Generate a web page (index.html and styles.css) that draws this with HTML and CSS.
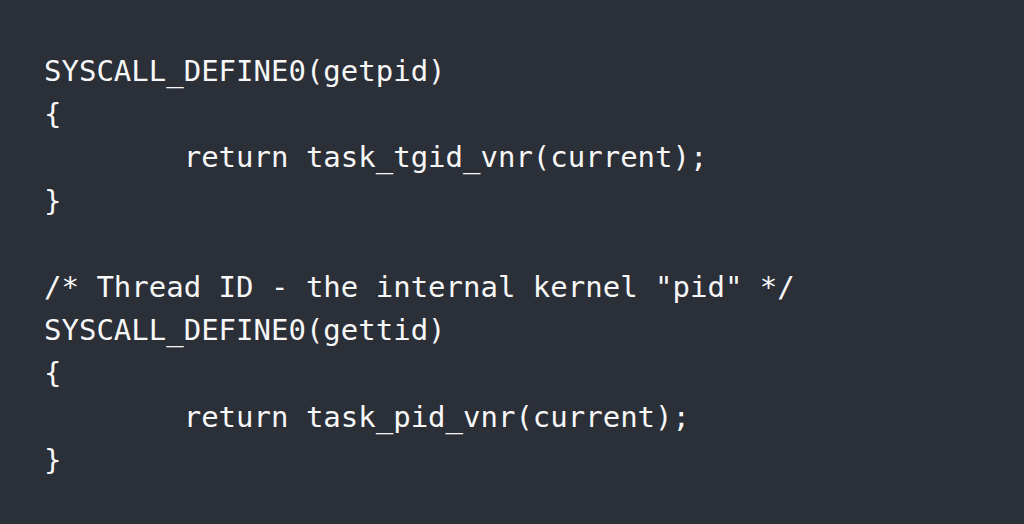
FILE: index.html
```html
<!DOCTYPE html>
<html>
<head>
<meta charset="utf-8">
<link rel="stylesheet" href="styles.css">
</head>
<body>
<pre class="code">SYSCALL_DEFINE0(getpid)
{
        return task_tgid_vnr(current);
}

/* Thread ID - the internal kernel "pid" */
SYSCALL_DEFINE0(gettid)
{
        return task_pid_vnr(current);
}</pre>
</body>
</html>
```

FILE: styles.css
```css
html, body {
  margin: 0;
  padding: 0;
  background: #2b2f37;
  width: 1024px;
  height: 524px;
  overflow: hidden;
}
.code {
  margin: 0;
  padding: 50px 0 0 44px;
  font-family: "DejaVu Sans Mono", monospace;
  font-size: 29px;
  line-height: 43.2px;
  color: #f7f7f7;
}
```
